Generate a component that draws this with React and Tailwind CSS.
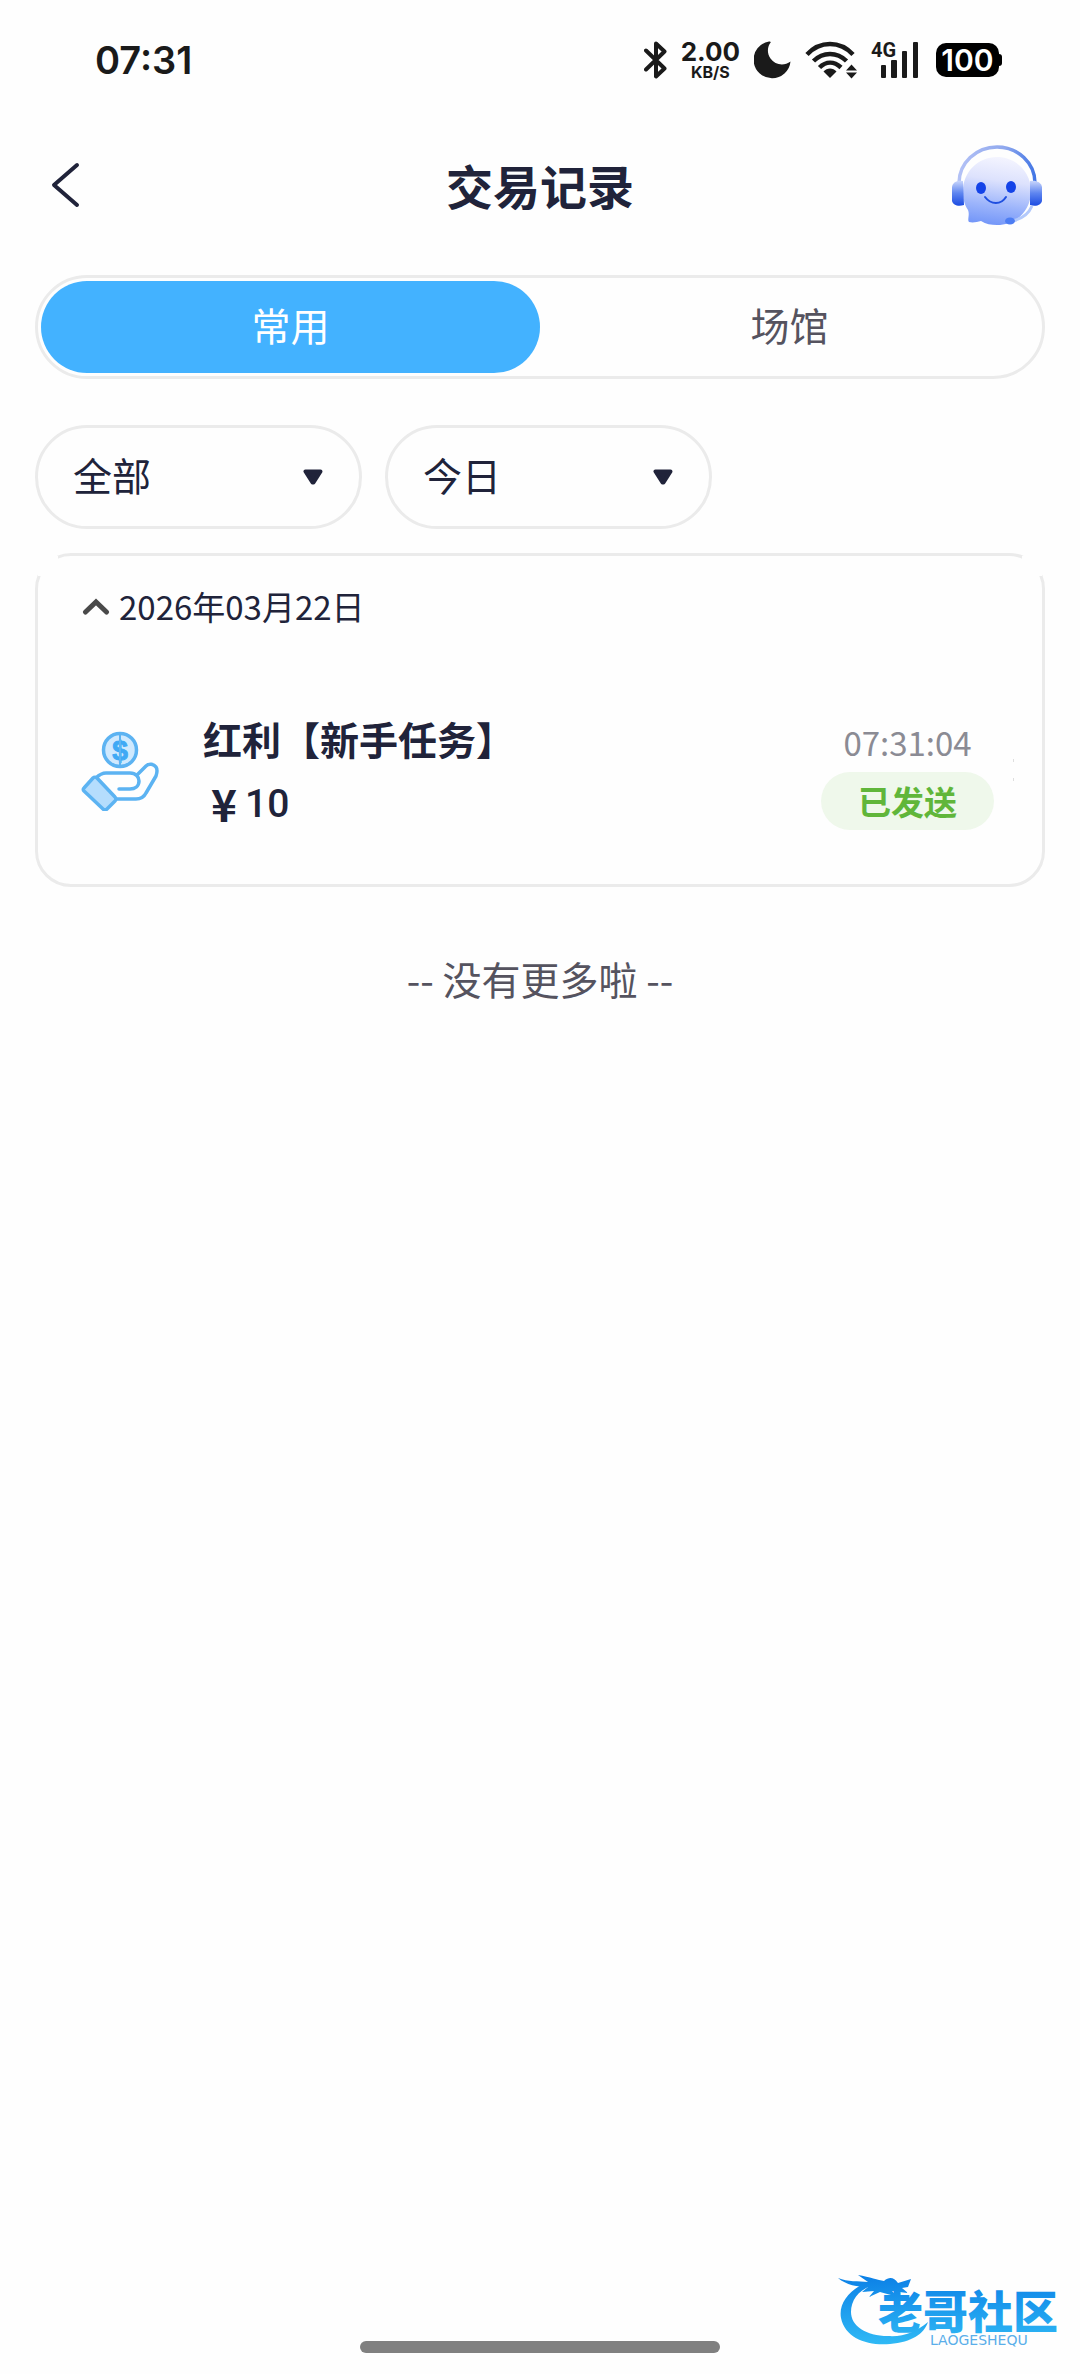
import React, { useState } from 'react';

const TABS = ['常用', '场馆'];

const FILTERS = [
  { id: 'type', label: '交易类型', options: ['全部', '存款', '取款', '红利'] },
  { id: 'range', label: '时间范围', options: ['今日', '昨日', '近7日', '近30日'] },
];

const DAYS = [
  {
    date: '2026年03月22日',
    records: [{ id: 1, title: '红利【新手任务】', amount: '10', time: '07:31:04', status: '已发送' }],
  },
];

const StatusBar = () => (
  <div className="flex h-[120px] items-center justify-between pl-[95px] pr-[78px] font-['Inter',sans-serif] text-[#1a1a1a]">
    <span className="text-[38px] font-semibold leading-none">07:31</span>
    <div className="flex items-center gap-[14px]">
      <svg className="h-[38px] w-[23px]" viewBox="0 0 23 38" fill="none" stroke="currentColor" strokeWidth="4" strokeLinejoin="round" strokeLinecap="round">
        <path d="M2 9.500L20.500 27.500L12 35.500V2.500L20.500 10.500L2 28.500" />
      </svg>
      <div className="flex flex-col items-center font-bold">
        <span className="text-[26px] leading-[24px]">2.00</span>
        <span className="text-[16px] leading-[16px]">KB/S</span>
      </div>
      <svg className="h-[38px] w-[37px]" viewBox="0 0 37 38" fill="currentColor">
        <path d="M15 .5A18.500 18.500 0 1 0 36.500 20.500C30 25.500 21 24 16.500 17.500C12.500 12 13.500 5 16.800 1.200C16.500 .5 16 .3 15 .5Z" />
      </svg>
      <svg className="h-[38px] w-[52px]" viewBox="0 0 52 38" fill="none" stroke="currentColor" strokeWidth="4.500">
        <path d="M2 13.500C15 -.5 35 -.5 48 13.500" />
        <path d="M8.500 20C18 10.500 32 10.500 41.500 20" />
        <path d="M14.500 26.500C21 20 29 20 36 26.500" />
        <path d="M18.500 30.500C22 26.500 28 26.500 31.500 30.500L25 37Z" fill="currentColor" stroke="none" />
        <path d="M46.500 23.500L52 29.500H41ZM46.500 37.500L52 31.500H41Z" fill="currentColor" stroke="none" />
      </svg>
      <svg className="h-[38px] w-[51px] overflow-visible" viewBox="0 0 51 38" fill="currentColor">
        <text x="0" y="16" fontSize="20" fontWeight="700" fontFamily="Roboto, sans-serif">4G</text>
        <rect x="10" y="24" width="5" height="13" rx="1" />
        <rect x="20" y="19" width="6" height="18" rx="1" />
        <rect x="31" y="10" width="5" height="27" rx="1" />
        <rect x="42" y="1" width="5" height="36" rx="1" />
      </svg>
      <div className="flex items-center">
        <span className="flex h-[34px] w-[63px] items-center justify-center rounded-[10px] bg-black text-[30px] font-semibold leading-none text-white">
          100
        </span>
        <span className="h-[12px] w-[3px] rounded-r-sm bg-black" />
      </div>
    </div>
  </div>
);

const SupportBot = () => (
  <svg className="h-[84px] w-[92px]" viewBox="0 0 92 84" fill="none">
    <defs>
      <linearGradient id="bot-face" x1="50" y1="10" x2="40" y2="82" gradientUnits="userSpaceOnUse">
        <stop offset="0" stopColor="#f6f6ff" />
        <stop offset="0.35" stopColor="#dde2fd" />
        <stop offset="0.7" stopColor="#9db5fb" />
        <stop offset="1" stopColor="#6f93f8" />
      </linearGradient>
      <linearGradient id="bot-ear" x1="0" y1="34" x2="0" y2="62" gradientUnits="userSpaceOnUse">
        <stop offset="0" stopColor="#d9e2fd" />
        <stop offset="0.5" stopColor="#5f86f0" />
        <stop offset="1" stopColor="#1546e0" />
      </linearGradient>
      <linearGradient id="bot-band" x1="6" y1="0" x2="86" y2="0" gradientUnits="userSpaceOnUse">
        <stop offset="0" stopColor="#b4c2f6" />
        <stop offset="0.6" stopColor="#8fa8ee" />
        <stop offset="1" stopColor="#3d72e4" />
      </linearGradient>
    </defs>
    <g transform="translate(0 2)">
      <path d="M8 38A38 36 0 0 1 84 38" stroke="url(#bot-band)" strokeWidth="3.500" />
      <path d="M46 12C65 12 80 27 80 46C80 65 66 80 46 80C40 80 35 79 30 76C26 77 22 78 18 77C16 75 19 70 17 65C13 59 12 53 12 46C12 27 27 12 46 12Z" fill="url(#bot-face)" />
      <path d="M12 36C6 35 2 37 1 42V56C2 60 7 62 13 60Z" fill="url(#bot-ear)" />
      <path d="M79 36C85 35 90 37 91 42V56C90 60 85 62 79 60Z" fill="url(#bot-ear)" />
      <ellipse cx="30" cy="43" rx="5" ry="6" fill="#1443e8" />
      <ellipse cx="60" cy="42" rx="5" ry="6" fill="#1443e8" />
      <path d="M34 52C40 60 50 60 55 52" stroke="#1f4fe0" strokeWidth="2" strokeLinecap="round" />
      <path d="M81 61C78 68 71 74 61 76" stroke="#b3c9fb" strokeWidth="3" />
      <ellipse cx="59" cy="76" rx="5" ry="3.500" fill="#4d7df3" />
    </g>
  </svg>
);

const Header = () => (
  <header className="grid h-[135px] grid-cols-[1fr_auto_1fr] items-center px-[37px] pb-[6px]">
    <button type="button" aria-label="返回" className="justify-self-start px-[12px]">
      <svg className="h-[48px] w-[32px]" viewBox="0 0 32 48" fill="none" stroke="#20233a" strokeWidth="4" strokeLinecap="round" strokeLinejoin="round">
        <path d="M28 4L5 24L28 44" />
      </svg>
    </button>
    <h1 className="text-[47px] font-bold leading-none text-[#20233a]">交易记录</h1>
    <button type="button" aria-label="在线客服" className="justify-self-end">
      <SupportBot />
    </button>
  </header>
);

const FilterSelect = ({ id, label, options }) => (
  <div className="relative w-[327px]">
    <select
      id={id}
      aria-label={label}
      className="h-[104px] w-full appearance-none rounded-full border-3 border-[#ebebeb] pb-[6px] pl-[35px] text-[39px] text-[#20233a] outline-none"
    >
      {options.map((option) => (
        <option key={option}>{option}</option>
      ))}
    </select>
    <svg className="pointer-events-none absolute right-[39px] top-[44px] h-[16px] w-[20px]" viewBox="0 0 20 16" fill="#20233a" stroke="#20233a" strokeWidth="4" strokeLinejoin="round">
      <path d="M2.500 2.500H17.500L10.500 13.500H9.500Z" />
    </svg>
  </div>
);

const BonusIcon = () => (
  <svg className="h-[80px] w-[78px]" viewBox="0 0 78 80" fill="none" stroke="#5cb3f2" strokeWidth="3.500" strokeLinejoin="round" strokeLinecap="round">
    <circle cx="39" cy="19" r="16.500" fill="#cfe9fe" />
    <text x="39" y="29" textAnchor="middle" fontSize="28" fontWeight="700" fontFamily="Liberation Sans, sans-serif" fill="#3fa9f5" stroke="#3fa9f5" strokeWidth="1">$</text>
    <path d="M39 4V34" strokeWidth="2" />
    <path d="M15 47C19 43 21 42 25 42H49C55 42 58 46 58 50C58 55 54 58 49 58H38" />
    <path d="M56 44L65 35C68 32 73 33 75 36C77 39 76 42 75 45L65 62C63 66 60 68 55 68H34" />
    <path d="M3 57L12 47C13 46 15 46 16 47L34 66C35 67 35 69 34 70L26 78C25 79 23 79 22 78L3 60C2 59 2 58 3 57Z" fill="#b5ddfd" />
  </svg>
);

const RecordRow = ({ title, amount, time, status }) => (
  <li className="relative flex items-center justify-between pl-[43px] pr-[48px]">
    <div className="flex items-center gap-[44px]">
      <BonusIcon />
      <div>
        <p className="text-[39px] font-bold leading-[64px]">{title}</p>
        <p className="flex items-center gap-[8px] pl-[8px] text-[39px] font-bold leading-[64px]">
          <span className="text-[44px]">¥</span>
          <span className="pt-[2px] font-['Roboto',sans-serif] font-medium">{amount}</span>
        </p>
      </div>
    </div>
    <div className="flex flex-col items-center">
      <time className="text-[33px] leading-[60px] text-[#8b8b94]">{time}</time>
      <span className="h-[58px] rounded-full bg-[#eff8eb] px-[37px] text-[33px] font-bold leading-[58px] text-[#60b63a]">
        {status}
      </span>
    </div>
    {/* ends of the hidden row bracket */}
    <span className="absolute right-[28px] top-[53px] h-[22px] w-px border-y-3 border-[#dedede]" />
  </li>
);

const DayCard = ({ date, records }) => {
  const [open, setOpen] = useState(true);

  return (
    <section className="relative rounded-[36px] border-3 border-[#ebebeb] pb-[48px] text-[#20233a]">
      {/* square header fill hides the top corners of the border */}
      <span className="absolute left-0 top-0 size-[20px] bg-[#fefefe]" />
      <span className="absolute right-0 top-0 size-[20px] bg-[#fefefe]" />
      <button
        type="button"
        aria-expanded={open}
        onClick={() => setOpen(!open)}
        className="flex h-[106px] items-center gap-[9px] pb-[6px] pl-[44px] text-[33px] leading-none"
      >
        <svg className="h-[20px] w-[28px]" viewBox="0 0 28 20" fill="none" stroke="#4a4a4a" strokeWidth="5" strokeLinecap="round">
          <path d="M3.500 16L14 6L24.500 16" />
        </svg>
        {date}
      </button>
      {open && (
        <ul className="pt-[44px]">
          {records.map((record) => (
            <RecordRow key={record.id} {...record} />
          ))}
        </ul>
      )}
    </section>
  );
};

const CommunityLogo = () => (
  <svg className="h-[80px] w-[226px] overflow-visible" viewBox="0 3 226 80" fill="none">
    <defs>
      <linearGradient id="logo-blue" x1="0" y1="4" x2="0" y2="74" gradientUnits="userSpaceOnUse">
        <stop offset="0" stopColor="#0b7fe6" />
        <stop offset="1" stopColor="#2fb9f5" />
      </linearGradient>
    </defs>
    <g fill="url(#logo-blue)">
      <path d="M36 10C14 16 0 32 3 48C7 68 29 76 52 74C74 72 86 64 90 52C78 62 66 67 50 66C28 66 13 56 13 42C13 30 21 19 36 15Z" />
      <path d="M0 8C10 12 20 11 30 12L20 5C32 7 40 10 46 11C52 6 56 8 60 13L73 9L70 17L64 18L70 23L54 21L60 27L42 22L31 27L36 21L24 22L30 17C20 17 8 15 0 8Z" />
      <text x="40" y="59" fontSize="45" fontWeight="900" fontFamily="Noto Sans CJK SC, sans-serif">老哥社区</text>
    </g>
    <text x="92" y="75" fontSize="14" fontFamily="DejaVu Sans, sans-serif" fill="#5aaeea">LAOGESHEQU</text>
  </svg>
);

const App = () => {
  const [activeTab, setActiveTab] = useState(TABS[0]);

  return (
    <div className="flex min-h-screen flex-col bg-[#fefefe] font-['Noto_Sans_CJK_SC',sans-serif]">
      <StatusBar />
      <Header />
      <main className="flex-1 px-[35px] pt-[20px]">
        <div role="tablist" className="grid grid-cols-2 rounded-full border-3 border-[#ebebeb] p-[3px]">
          {TABS.map((tab) => (
            <button
              key={tab}
              type="button"
              role="tab"
              aria-selected={tab === activeTab}
              onClick={() => setActiveTab(tab)}
              className={`h-[92px] rounded-full pb-[6px] text-[39px] leading-none ${
                tab === activeTab ? 'bg-[#43b2ff] text-white' : 'text-[#55535f]'
              }`}
            >
              {tab}
            </button>
          ))}
        </div>

        <div className="flex gap-[23px] pt-[46px] pb-[24px]">
          {FILTERS.map((filter) => (
            <FilterSelect key={filter.id} {...filter} />
          ))}
        </div>

        {DAYS.map((day) => (
          <DayCard key={day.date} {...day} />
        ))}

        <p className="pt-[61px] text-center text-[39px] leading-[60px] text-[#55535f]">-- 没有更多啦 --</p>
      </main>

      <footer className="grid grid-cols-[1fr_360px_1fr] items-end px-[16px] pb-[21px]">
        <span className="col-start-2 h-[12px] rounded-full bg-[#808080]" />
        <div className="justify-self-end">
          <CommunityLogo />
        </div>
      </footer>
    </div>
  );
};

export default App;
